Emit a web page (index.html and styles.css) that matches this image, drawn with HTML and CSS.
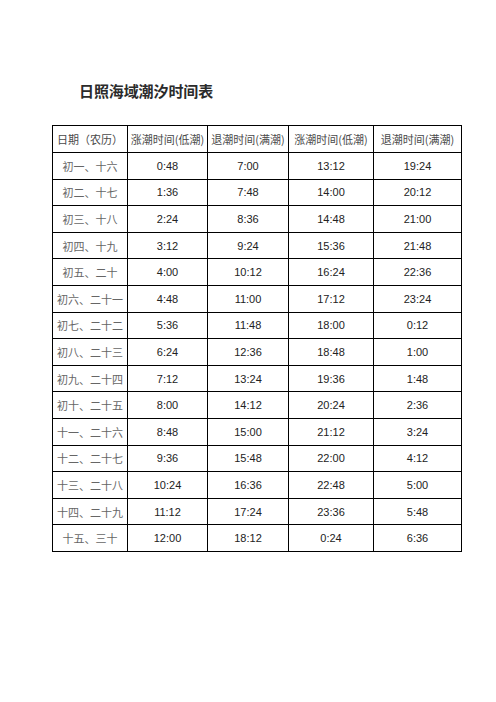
FILE: index.html
```html
<!DOCTYPE html>
<html lang="zh">
<head>
<meta charset="utf-8">
<title>日照海域潮汐时间表</title>
<link rel="stylesheet" href="styles.css">
</head>
<body>
<div class="page">
  <h1 class="title">日照海域潮汐时间表</h1>
  <table class="tide">
    <colgroup>
      <col class="c1"><col class="c2"><col class="c3"><col class="c4"><col class="c5">
    </colgroup>
    <thead>
      <tr class="head">
        <th>日期（农历）</th>
        <th>涨潮时间(低潮)</th>
        <th>退潮时间(满潮)</th>
        <th>涨潮时间(低潮)</th>
        <th>退潮时间(满潮)</th>
      </tr>
    </thead>
    <tbody>
      <tr><td class="date">初一、十六</td><td>0:48</td><td>7:00</td><td>13:12</td><td>19:24</td></tr>
      <tr><td class="date">初二、十七</td><td>1:36</td><td>7:48</td><td>14:00</td><td>20:12</td></tr>
      <tr><td class="date">初三、十八</td><td>2:24</td><td>8:36</td><td>14:48</td><td>21:00</td></tr>
      <tr><td class="date">初四、十九</td><td>3:12</td><td>9:24</td><td>15:36</td><td>21:48</td></tr>
      <tr><td class="date">初五、二十</td><td>4:00</td><td>10:12</td><td>16:24</td><td>22:36</td></tr>
      <tr><td class="date">初六、二十一</td><td>4:48</td><td>11:00</td><td>17:12</td><td>23:24</td></tr>
      <tr><td class="date">初七、二十二</td><td>5:36</td><td>11:48</td><td>18:00</td><td>0:12</td></tr>
      <tr><td class="date">初八、二十三</td><td>6:24</td><td>12:36</td><td>18:48</td><td>1:00</td></tr>
      <tr><td class="date">初九、二十四</td><td>7:12</td><td>13:24</td><td>19:36</td><td>1:48</td></tr>
      <tr><td class="date">初十、二十五</td><td>8:00</td><td>14:12</td><td>20:24</td><td>2:36</td></tr>
      <tr><td class="date">十一、二十六</td><td>8:48</td><td>15:00</td><td>21:12</td><td>3:24</td></tr>
      <tr><td class="date">十二、二十七</td><td>9:36</td><td>15:48</td><td>22:00</td><td>4:12</td></tr>
      <tr><td class="date">十三、二十八</td><td>10:24</td><td>16:36</td><td>22:48</td><td>5:00</td></tr>
      <tr><td class="date">十四、二十九</td><td>11:12</td><td>17:24</td><td>23:36</td><td>5:48</td></tr>
      <tr><td class="date">十五、三十</td><td>12:00</td><td>18:12</td><td>0:24</td><td>6:36</td></tr>
    </tbody>
  </table>
</div>
</body>
</html>
```

FILE: styles.css
```css
html, body {
  margin: 0;
  padding: 0;
  background: #ffffff;
}

.page {
  width: 496px;
  height: 702px;
  padding: 82px 0 0 52px;
  box-sizing: border-box;
}

.title {
  margin: 0 0 0 27px;
  font-family: "Noto Sans CJK SC", "Noto Sans", sans-serif;
  font-size: 15px;
  line-height: 17px;
  font-weight: 700;
  color: #2b2b2b;
  letter-spacing: -0.1px;
}

.tide {
  margin-top: 26px;
  border-collapse: collapse;
  table-layout: fixed;
  width: 409px;
}

.c1 { width: 75px; }
.c2 { width: 80px; }
.c3 { width: 81px; }
.c4 { width: 85px; }
.c5 { width: 88px; }

.tide th,
.tide td {
  border: 1px solid #000;
  padding: 0;
  text-align: center;
  white-space: nowrap;
  overflow: hidden;
}

.tide tr { height: 26.6px; }
.tide tr.head { height: 27px; }

.tide th {
  font-family: "Noto Sans CJK SC", sans-serif;
  font-weight: 400;
  font-size: 11px;
  color: #4a4a4a;
}

.tide td {
  font-family: "Liberation Sans", Arial, sans-serif;
  font-size: 11px;
  color: #222;
}

.tide td.date {
  font-family: "Noto Sans CJK SC", sans-serif;
  font-size: 11px;
  color: #666;
}
```
